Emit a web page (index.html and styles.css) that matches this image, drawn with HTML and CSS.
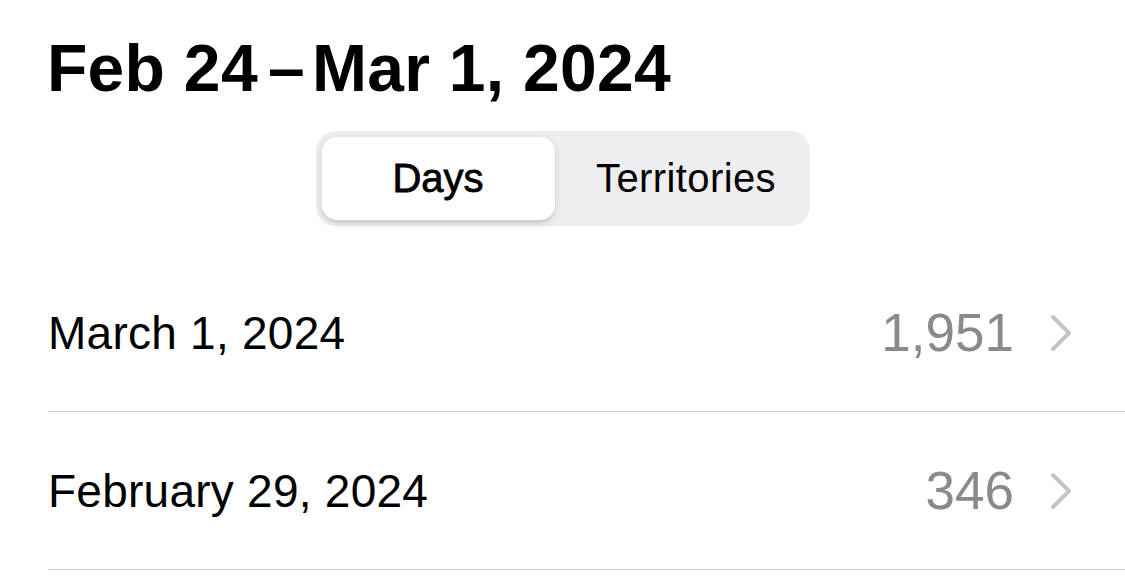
FILE: index.html
```html
<!DOCTYPE html>
<html>
<head>
<meta charset="utf-8">
<link rel="stylesheet" href="styles.css">
</head>
<body>
<main class="page">
  <h1 class="title">Feb 24<span class="dash">–</span>Mar 1, 2024</h1>
  <div class="segmented">
    <div class="seg seg-selected">Days</div>
    <div class="seg seg-other">Territories</div>
  </div>
  <ul class="list">
    <li class="row">
      <span class="label">March 1, 2024</span>
      <span class="value">1,951</span>
      <svg class="chev" width="24" height="40" viewBox="0 0 24 40"><polyline points="4,4 20,20 4,36" fill="none" stroke="#c4c4c7" stroke-width="4" stroke-linecap="round" stroke-linejoin="round"/></svg>
    </li>
    <li class="row">
      <span class="label">February 29, 2024</span>
      <span class="value">346</span>
      <svg class="chev" width="24" height="40" viewBox="0 0 24 40"><polyline points="4,4 20,20 4,36" fill="none" stroke="#c4c4c7" stroke-width="4" stroke-linecap="round" stroke-linejoin="round"/></svg>
    </li>
  </ul>
</main>
</body>
</html>
```

FILE: styles.css
```css
* { box-sizing: border-box; }
html, body {
  margin: 0;
  padding: 0;
  background: #ffffff;
}
body {
  font-family: "Liberation Sans", Arial, sans-serif;
  color: #000;
}
.page {
  display: flex;
  flex-direction: column;
}
.title {
  margin: 0;
  padding: 28px 0 0 47px;
  height: 109px;
  font-size: 66px;
  line-height: 80px;
  font-weight: 700;
  letter-spacing: 0.3px;
}
.dash {
  margin: 0 7px 0 10px;
}
.segmented {
  margin: 22px auto 0;
  width: 494px;
  height: 95px;
  padding: 6px;
  border-radius: 20px;
  background: #eeeef0;
  display: flex;
}
.seg {
  display: flex;
  align-items: center;
  justify-content: center;
  font-size: 40px;
  color: #000;
  flex: 1;
}
.seg-other {
  padding-left: 14px;
  letter-spacing: 0.4px;
}
.seg-selected {
  flex: 0 0 233px;
  background: #fff;
  border-radius: 15px;
  -webkit-text-stroke: 0.8px #000;
  box-shadow: 0 3px 8px rgba(0,0,0,0.12), 0 3px 1px rgba(0,0,0,0.04);
}
.list {
  list-style: none;
  margin: 28px 0 0 48px;
  padding: 0;
}
.row {
  display: flex;
  align-items: center;
  height: 158px;
  border-bottom: 1px solid #c8c8ca;
  padding-right: 52px;
  font-size: 46px;
}
.label {
  flex: 1;
  letter-spacing: 0.25px;
}
.value {
  color: #8a8a8e;
  font-size: 53px;
  margin-right: 35px;
}
.chev {
  display: block;
}
```
